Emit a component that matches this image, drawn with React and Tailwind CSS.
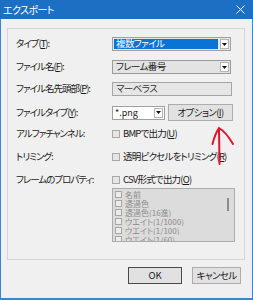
import React from 'react'

// Export dialog (エクスポート) — Windows 10 style dialog with a red annotation arrow.

const jp = "font-['Noto_Sans_CJK_JP','Noto_Sans',sans-serif] [font-feature-settings:'palt']"

function Key({ k }) {
  return <span className="underline underline-offset-[1px]">{k}</span>
}

function Label({ children }) {
  return (
    <div className="w-[104px] pl-[8px] text-[9.5px] tracking-[-1px] leading-none text-[#1a1a1a] whitespace-nowrap">
      {children}
    </div>
  )
}

function Arrow() {
  return (
    <div className="w-[9px] h-[10px] bg-white border border-[#b5b5b5] flex items-center justify-center">
      <svg width="5" height="3" viewBox="0 0 5 3">
        <path d="M0 0 H5 L2.5 3 Z" fill="#111" />
      </svg>
    </div>
  )
}

function Check({ children }) {
  return (
    <div className="flex items-center gap-[3px] text-[9.5px] tracking-[-0.8px] leading-none text-[#1a1a1a] whitespace-nowrap">
      <div className="w-[8px] h-[8px] border border-[#a8a8a8] bg-[#e6e6e6]" />
      <span>{children}</span>
    </div>
  )
}

const props = ['名前', '透過色', '透過色(16進)', 'ウエイト(1/1000)', 'ウエイト(1/100)', 'ウエイト(1/60)']

export default function App() {
  return (
    <div className={`${jp} w-[253px] h-[300px] bg-[#3d86cf] flex flex-col px-px pb-[2px]`}>
      {/* Title bar */}
      <div className="h-[19px] -mx-px bg-[#1c6fc3] flex items-center justify-between pl-[3px] pr-[8px]">
        <span className="text-[10px] tracking-[-0.6px] leading-none text-white">エクスポート</span>
        <svg width="9" height="9" viewBox="0 0 9 9">
          <path d="M0.5 0.5 L8.5 8.5 M8.5 0.5 L0.5 8.5" stroke="#fff" strokeWidth="1" />
        </svg>
      </div>

      <div className="flex-1 bg-[#f0f0f0] flex flex-col">
        {/* Group box */}
        <div className="relative mt-[9px] ml-[6px] w-[238px] h-[232px] border border-[#d5d5d5] flex flex-col">
          <div className="mt-[8px] h-[14px] flex items-center">
            <Label>タイプ(<Key k="T" />):</Label>
            <div className="w-[119px] h-[14px] border border-[#a0a0a0] bg-[#e5e5e5] flex items-center p-px gap-[2px]">
              <div className="flex-1 h-full bg-[#0a74d6] text-white text-[9.5px] tracking-[-0.6px] leading-none flex items-center pl-[2px]">
                複数ファイル
              </div>
              <Arrow />
            </div>
          </div>

          <div className="mt-[9px] h-[14px] flex items-center">
            <Label>ファイル名(<Key k="F" />):</Label>
            <div className="w-[119px] h-[14px] border border-[#9a9a9a] bg-[#e3e3e3] flex items-center p-px gap-[2px]">
              <div className="flex-1 text-[9.5px] tracking-[-0.6px] leading-none text-[#1a1a1a] pl-[2px]">フレーム番号</div>
              <Arrow />
            </div>
          </div>

          <div className="mt-[8px] h-[14px] flex items-center">
            <Label>ファイル名先頭部(<Key k="P" />):</Label>
            <div className="w-[120px] h-[14px] border border-[#a5a5a5] bg-[#e6e6e6] flex items-center pl-[3px] text-[9.5px] tracking-[-0.6px] leading-none text-[#333]">
              マーベラス
            </div>
          </div>

          <div className="mt-[8px] h-[17px] flex items-center">
            <Label>ファイルタイプ(<Key k="Y" />):</Label>
            <div className="w-[53px] h-[14px] border border-[#a0a0a0] bg-white flex items-center p-px gap-[2px]">
              <div className="flex-1 text-[9px] leading-none text-[#1a1a1a] pl-[1px]">*.png</div>
              <Arrow />
            </div>
            <div className="ml-[3px] w-[65px] h-[17px] border border-[#adadad] bg-[#e1e1e1] flex items-center justify-center text-[9.5px] tracking-[-0.6px] leading-none text-[#1a1a1a] whitespace-nowrap">
              オプション(<Key k="I" />)
            </div>
          </div>

          <div className="mt-[7px] h-[12px] flex items-center">
            <Label>アルファチャンネル:</Label>
            <Check>BMPで出力(<Key k="U" />)</Check>
          </div>

          <div className="mt-[11px] h-[12px] flex items-center">
            <Label>トリミング:</Label>
            <Check>透明ピクセルをトリミング(<Key k="R" />)</Check>
          </div>

          <div className="mt-[11px] h-[12px] flex items-center">
            <Label>フレームのプロパティ:</Label>
            <Check>CSV形式で出力(<Key k="O" />)</Check>
          </div>

          {/* Disabled property list */}
          <div className="mt-[2px] ml-[104px] w-[123px] h-[54px] border border-[#ababab] bg-[#dcdcdc] flex overflow-hidden">
            <div className="flex-1 flex flex-col pt-px pl-[2px]">
              {props.map(p => (
                <div key={p} className="h-[9px] flex items-center gap-[3px] shrink-0 overflow-hidden">
                  <div className="w-[7px] h-[7px] border border-[#a5a5a5] bg-[#ececec] shrink-0" />
                  <span className="text-[8px] leading-[8px] text-[#8a8a8a] whitespace-nowrap">{p}</span>
                </div>
              ))}
            </div>
            <div className="w-[13px] flex justify-center pt-[9px]">
              <div className="w-[2px] h-[13px] bg-[#8c8c8c]" />
            </div>
          </div>

          {/* Red annotation arrow */}
          <svg
            className="absolute left-[198px] top-[92px]"
            width="35"
            height="50"
            viewBox="205 120 35 50"
          >
            <path
              d="M218 128 L218.5 163 M211.5 143 Q214 133 218 127 Q225 131 232 143"
              stroke="#e3112b"
              strokeWidth="2"
              fill="none"
              strokeLinecap="round"
            />
          </svg>
        </div>

        {/* Dialog buttons */}
        <div className="mt-[7px] pr-[11px] flex justify-end gap-[10px]">
          <div className="w-[54px] h-[17px] border border-[#4a4a4a] bg-[#e1e1e1] flex items-center justify-center text-[9.5px] leading-none text-[#1a1a1a]">
            OK
          </div>
          <div className="w-[49px] h-[17px] border border-[#adadad] bg-[#e1e1e1] flex items-center justify-center text-[9.5px] tracking-[-0.6px] leading-none text-[#1a1a1a] whitespace-nowrap">
            キャンセル
          </div>
        </div>
      </div>
    </div>
  )
}
